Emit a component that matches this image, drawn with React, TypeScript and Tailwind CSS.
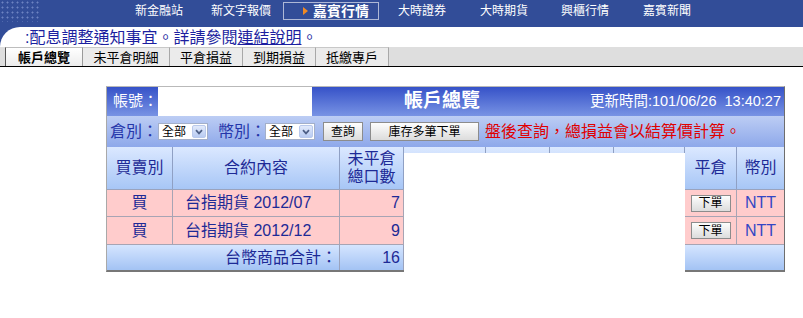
const rowText = 'text-[16px] text-[#1d2a96]';
const cols = [66, 167, 64, 82, 64, 64, 71, 52, 47];

function SelectBox() {
  return (
    <div className="flex h-[17px] w-[50px] items-center border border-[#a3afc9] bg-white pl-[3px] text-[12px] leading-none text-black">
      <span className="flex-1">全部</span>
      <span className="mr-px flex h-[13px] w-[14px] items-center justify-center rounded-[2px] border border-[#b9c9ec] bg-[linear-gradient(#e2eafb,#b8cbf2)]">
        <svg width="8" height="6" viewBox="0 0 8 6">
          <path d="M1 1.2 L4 4.4 L7 1.2" stroke="#4d5f86" strokeWidth="1.7" fill="none" />
        </svg>
      </span>
    </div>
  );
}

function GrayButton({ label, w, h }: { label: string; w: string; h: string }) {
  return (
    <div
      className={`flex ${w} ${h} items-center justify-center border border-[#8c8c8c] bg-[linear-gradient(#fdfdfd,#dcdcdc)] text-[12px] leading-none text-black`}
    >
      {label}
    </div>
  );
}

const navItems = [
  { label: '新金融站', ml: 'ml-0', w: 'w-[48px]' },
  { label: '新文字報價', ml: 'ml-[27px]', w: 'w-[62px]' },
];
const navItems2 = [
  { label: '大時證券', ml: 'ml-[19px]' },
  { label: '大時期貨', ml: 'ml-[34px]' },
  { label: '興櫃行情', ml: 'ml-[33px]' },
  { label: '嘉賓新聞', ml: 'ml-[34px]' },
];

const tabs = [
  { label: '未平倉明細', w: 'w-[87px]' },
  { label: '平倉損益', w: 'w-[73px]' },
  { label: '到期損益', w: 'w-[73px]' },
  { label: '抵繳專戶', w: 'w-[73px]' },
];

const positions = [
  { side: '買', contract: '台指期貨 2012/07', qty: 7, h: 'h-[27px]' },
  { side: '買', contract: '台指期貨 2012/12', qty: 9, h: 'h-[28px]' },
];

export default function App() {
  return (
    <div className="min-h-[318px] bg-white font-['Liberation_Sans','Noto_Sans_CJK_TC',sans-serif]">
      {/* top navigation */}
      <div className="flex h-[27px] items-start bg-[#324d98] text-[12px] leading-[20px] text-white">
        <div className="h-[22px] w-[40px] bg-[radial-gradient(circle,#6d83c2_0.8px,transparent_1.2px)] bg-[length:5px_5px]" />
        <div className="ml-[95px] flex">
          {navItems.map((n) => (
            <div key={n.label} className={`${n.ml} ${n.w} mt-[1px] whitespace-nowrap text-center`}>
              {n.label}
            </div>
          ))}
          <div className="ml-[11px] mt-[2px] flex h-[18px] w-[96px] items-center border border-[#aeb8d6] pl-[19px]">
            <svg width="5" height="8" viewBox="0 0 5 8">
              <path d="M0 0 L5 4 L0 8 Z" fill="#f08a24" />
            </svg>
            <span className="ml-[5px] text-[14px] font-bold leading-none">嘉賓行情</span>
          </div>
          {navItems2.map((n) => (
            <div key={n.label} className={`${n.ml} mt-[1px] w-[48px] whitespace-nowrap text-center`}>
              {n.label}
            </div>
          ))}
        </div>
      </div>

      {/* notice line */}
      <div className="bg-[#324d98]">
        <div className="h-[20px] rounded-tl-[20px] bg-white pl-[25px] text-[16px] leading-[22px] text-[#1c1fa0] whitespace-nowrap">
          :配息調整通知事宜。詳請參閱<span className="underline">連結說明</span>。
        </div>
      </div>

      {/* tabs */}
      <div className="flex h-[20px] border-b border-black bg-[#dedede] pl-[5px] text-[13px] leading-[19px] text-black">
        <div className="w-[78px] border-l border-r border-t border-l-[#555] border-r-[#9a9a9a] border-t-[#bdbdbd] bg-[linear-gradient(#ffffff,#ececec)] text-center font-bold">
          帳戶總覽
        </div>
        {tabs.map((t) => (
          <div
            key={t.label}
            className={`${t.w} border-r border-t border-r-[#a8a8a8] border-t-[#c8c8c8] bg-[#ebebeb] text-center`}
          >
            {t.label}
          </div>
        ))}
      </div>

      {/* account panel */}
      <div className="relative ml-[106px] mt-[19px] w-[679px] border-l border-r border-t border-b-2 border-l-[#a9a9a9] border-t-[#b9b9b9] border-r-[#6e6e6e] border-b-[#777]">
        {/* title row */}
        <div className="flex h-[29px] items-center bg-[linear-gradient(#3652c8,#7893e4)] text-white">
          <span className="pl-[6px] text-[15px]">帳號：</span>
          <div className="h-full w-[154px] bg-white" />
          <span className="ml-[92px] text-[19px] font-bold">帳戶總覽</span>
          <span className="ml-auto whitespace-nowrap pr-[3px] text-[14.5px]">
            更新時間:101/06/26&nbsp;&nbsp;13:40:27
          </span>
        </div>

        {/* filter row */}
        <div className="flex h-[31px] items-center bg-[linear-gradient(#bccdf4,#8ea8ea)] pl-[3px] text-[16px] text-[#2536aa]">
          <span className="w-[48px] whitespace-nowrap">倉別：</span>
          <SelectBox />
          <span className="ml-[10px] w-[47px] whitespace-nowrap">幣別：</span>
          <SelectBox />
          <div className="ml-[8px]">
            <GrayButton label="查詢" w="w-[40px]" h="h-[19px]" />
          </div>
          <div className="ml-[7px]">
            <GrayButton label="庫存多筆下單" w="w-[109px]" h="h-[19px]" />
          </div>
          <span className="ml-[6px] whitespace-nowrap text-[#e00000]">盤後查詢，總損益會以結算價計算。</span>
        </div>

        {/* table header */}
        <div className={`flex h-[43px] border-b border-[#9aa3bd] bg-[linear-gradient(#dbe8ff,#a7c6f6)] ${rowText}`}>
          {cols.map((w, i) => (
            <div
              key={i}
              style={{ width: w }}
              className={`flex items-center justify-center text-center leading-[18px] ${i < cols.length - 1 ? 'border-r border-[#8fa0c4]' : ''}`}
            >
              {i === 0 && '買賣別'}
              {i === 1 && '合約內容'}
              {i === 2 && (
                <span>
                  未平倉
                  <br />
                  總口數
                </span>
              )}
              {i === 7 && '平倉'}
              {i === 8 && '幣別'}
            </div>
          ))}
        </div>

        {/* data rows */}
        {positions.map((p) => (
          <div key={p.contract} className={`flex ${p.h} border-b border-[#a7a4b4] bg-[#ffcccc] ${rowText}`}>
            <div className="flex w-[66px] items-center justify-center border-r border-[#a7a4b4]">{p.side}</div>
            <div className="flex w-[167px] items-center border-r border-[#a7a4b4] pl-[12px]">{p.contract}</div>
            <div className="flex w-[64px] items-center justify-end border-r border-[#a7a4b4] pr-[3px]">{p.qty}</div>
            <div className="w-[82px] border-r border-[#a7a4b4]" />
            <div className="w-[64px] border-r border-[#a7a4b4]" />
            <div className="w-[64px] border-r border-[#a7a4b4]" />
            <div className="w-[71px] border-r border-[#a7a4b4]" />
            <div className="flex w-[52px] items-center justify-center border-r border-[#a7a4b4]">
              <GrayButton label="下單" w="w-[40px]" h="h-[17px]" />
            </div>
            <div className="flex w-[47px] items-center justify-center text-[#3346c4]">NTT</div>
          </div>
        ))}

        {/* total row */}
        <div className={`flex h-[25px] bg-[linear-gradient(#d5e5ff,#a3c3f4)] ${rowText}`}>
          <div className="flex w-[233px] items-center justify-end border-r border-[#9aa3bd] pr-[2px]">台幣商品合計：</div>
          <div className="flex w-[64px] items-center justify-end border-r border-[#9aa3bd] pr-[3px]">16</div>
          <div className="w-[281px]" />
          <div className="w-[99px]" />
        </div>

        {/* blank layer covering hidden columns */}
        <div className="absolute left-[297px] top-[66px] h-[130px] w-[281px] bg-white" />
      </div>
    </div>
  );
}
